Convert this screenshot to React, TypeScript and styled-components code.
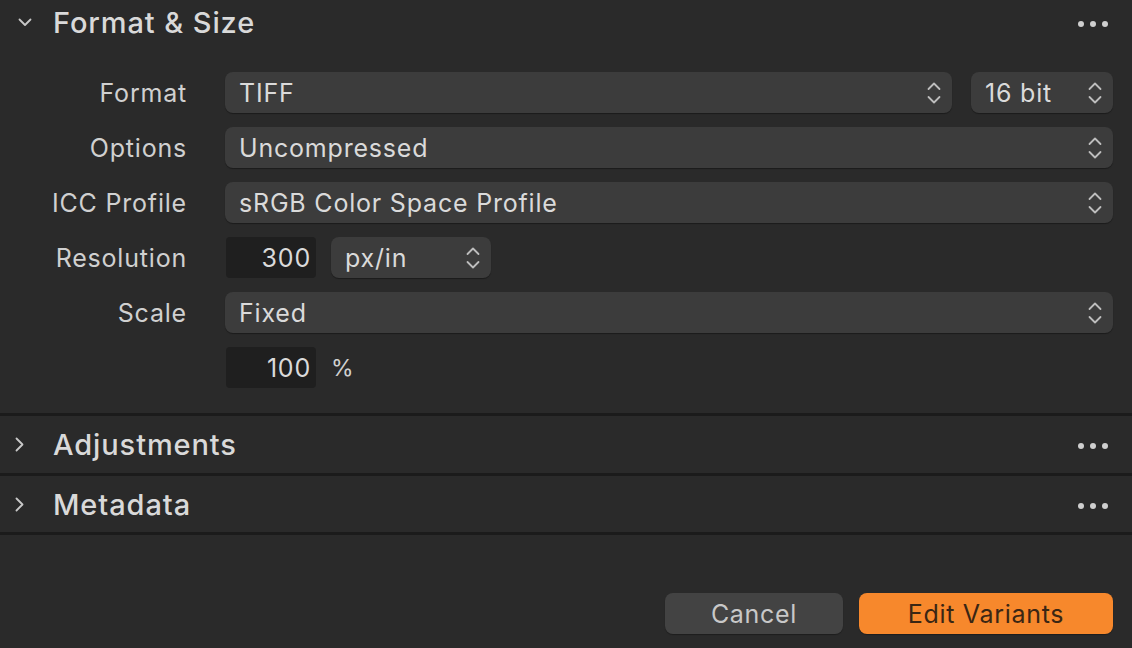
import React from "react";
import styled, { createGlobalStyle } from "styled-components";

const GlobalStyle = createGlobalStyle`
  html, body {
    margin: 0;
    padding: 0;
    background: #2a2a2a;
  }
  body {
    font-family: Inter, "Liberation Sans", Arial, sans-serif;
    color: #d6d6d6;
    -webkit-font-smoothing: antialiased;
  }
`;

const Panel = styled.div`
  width: 1132px;
  height: 648px;
  background: #2a2a2a;
  display: flex;
  flex-direction: column;
  overflow: hidden;
`;

const Section = styled.section`
  border-bottom: 3px solid #1b1b1b;
`;

const SectionHeader = styled.div<{ $height: number }>`
  height: ${(p) => p.$height}px;
  display: flex;
  align-items: center;
  padding: 0 22px 0 0;
`;

const ChevronBox = styled.div`
  width: 53px;
  display: flex;
  align-items: center;
  justify-content: flex-start;
`;

const SectionTitle = styled.div`
  flex: 1;
  font-size: 29px;
  font-weight: 500;
  color: #d9d9d9;
  letter-spacing: 0.9px;
`;

const Dots = styled.div`
  display: flex;
  gap: 6px;
  padding-right: 2px;
  margin-top: 3px;
  span {
    width: 6px;
    height: 6px;
    border-radius: 50%;
    background: #cfcfcf;
  }
`;

const Form = styled.div`
  display: grid;
  grid-template-columns: 187px 1fr;
  column-gap: 38px;
  row-gap: 14px;
  padding: 27px 19px 25px 0;
  align-items: center;
`;

const Label = styled.div`
  text-align: right;
  font-size: 25px;
  color: #d0d0d0;
  letter-spacing: 0.8px;
`;

const Controls = styled.div`
  display: flex;
  align-items: center;
  gap: 15px;
`;

const Select = styled.div<{ $width?: number }>`
  height: 41px;
  box-sizing: border-box;
  ${(p) => (p.$width ? `width: ${p.$width}px; flex: none;` : "flex: 1;")}
  background: #3c3c3c;
  border-radius: 8px;
  display: flex;
  align-items: center;
  justify-content: space-between;
  padding: 0 10px 0 14px;
  font-size: 25px;
  color: #dadada;
  letter-spacing: 0.8px;
  box-shadow: 0 1px 1px rgba(0, 0, 0, 0.35);
`;

const NumberField = styled.div`
  width: 90px;
  height: 41px;
  box-sizing: border-box;
  background: #1f1f1f;
  border-radius: 4px;
  display: flex;
  align-items: center;
  justify-content: flex-end;
  padding-right: 5px;
  font-size: 25px;
  letter-spacing: 0.8px;
  color: #dadada;
  margin-left: 1px;
`;

const Unit = styled.span`
  font-size: 23px;
  color: #d0d0d0;
`;

const Footer = styled.div`
  flex: 1;
  display: flex;
  align-items: flex-end;
  justify-content: flex-end;
  gap: 16px;
  padding: 0 19px 14px 0;
`;

const Button = styled.button<{ $primary?: boolean }>`
  height: 41px;
  width: ${(p) => (p.$primary ? 254 : 178)}px;
  border: none;
  border-radius: 8px;
  font-family: Inter, "Liberation Sans", Arial, sans-serif;
  font-size: 25px;
  letter-spacing: 0.7px;
  background: ${(p) => (p.$primary ? "#f7882c" : "#434343")};
  color: ${(p) => (p.$primary ? "#3a2614" : "#c8c8c8")};
  box-shadow: 0 1px 1px rgba(0, 0, 0, 0.3);
`;

const Stepper = () => (
  <svg width="16" height="28" viewBox="0 0 16 28" fill="none">
    <path d="M2.5 10 L8 4.5 L13.5 10" stroke="#bdbdbd" strokeWidth="1.8" strokeLinecap="round" strokeLinejoin="round" />
    <path d="M2.5 18 L8 23.5 L13.5 18" stroke="#bdbdbd" strokeWidth="1.8" strokeLinecap="round" strokeLinejoin="round" />
  </svg>
);

const ChevronDown = () => (
  <svg width="14" height="9" viewBox="0 0 14 9" fill="none" style={{ marginLeft: 18 }}>
    <path d="M1.5 1.5 L7 7 L12.5 1.5" stroke="#c8c8c8" strokeWidth="1.8" strokeLinecap="round" strokeLinejoin="round" />
  </svg>
);

const ChevronRight = () => (
  <svg width="9" height="15" viewBox="0 0 9 15" fill="none" style={{ marginLeft: 15 }}>
    <path d="M1.5 1.5 L7.5 7.5 L1.5 13.5" stroke="#c8c8c8" strokeWidth="1.8" strokeLinecap="round" strokeLinejoin="round" />
  </svg>
);

const More = () => (
  <Dots>
    <span />
    <span />
    <span />
  </Dots>
);

export default function App() {
  return (
    <>
      <GlobalStyle />
      <Panel>
        <Section>
          <SectionHeader $height={45}>
            <ChevronBox>
              <ChevronDown />
            </ChevronBox>
            <SectionTitle>Format &amp; Size</SectionTitle>
            <More />
          </SectionHeader>
          <Form>
            <Label>Format</Label>
            <Controls>
              <Select>
                TIFF
                <Stepper />
              </Select>
              <Select $width={142} style={{ marginLeft: 4 }}>
                16 bit
                <Stepper />
              </Select>
            </Controls>

            <Label>Options</Label>
            <Select>
              Uncompressed
              <Stepper />
            </Select>

            <Label>ICC Profile</Label>
            <Select>
              sRGB Color Space Profile
              <Stepper />
            </Select>

            <Label>Resolution</Label>
            <Controls>
              <NumberField>300</NumberField>
              <Select $width={160}>
                px/in
                <Stepper />
              </Select>
            </Controls>

            <Label>Scale</Label>
            <Select>
              Fixed
              <Stepper />
            </Select>

            <div />
            <Controls>
              <NumberField>100</NumberField>
              <Unit>%</Unit>
            </Controls>
          </Form>
        </Section>

        <Section>
          <SectionHeader $height={57}>
            <ChevronBox>
              <ChevronRight />
            </ChevronBox>
            <SectionTitle>Adjustments</SectionTitle>
            <More />
          </SectionHeader>
        </Section>

        <Section>
          <SectionHeader $height={56}>
            <ChevronBox>
              <ChevronRight />
            </ChevronBox>
            <SectionTitle>Metadata</SectionTitle>
            <More />
          </SectionHeader>
        </Section>

        <Footer>
          <Button>Cancel</Button>
          <Button $primary>Edit Variants</Button>
        </Footer>
      </Panel>
    </>
  );
}
